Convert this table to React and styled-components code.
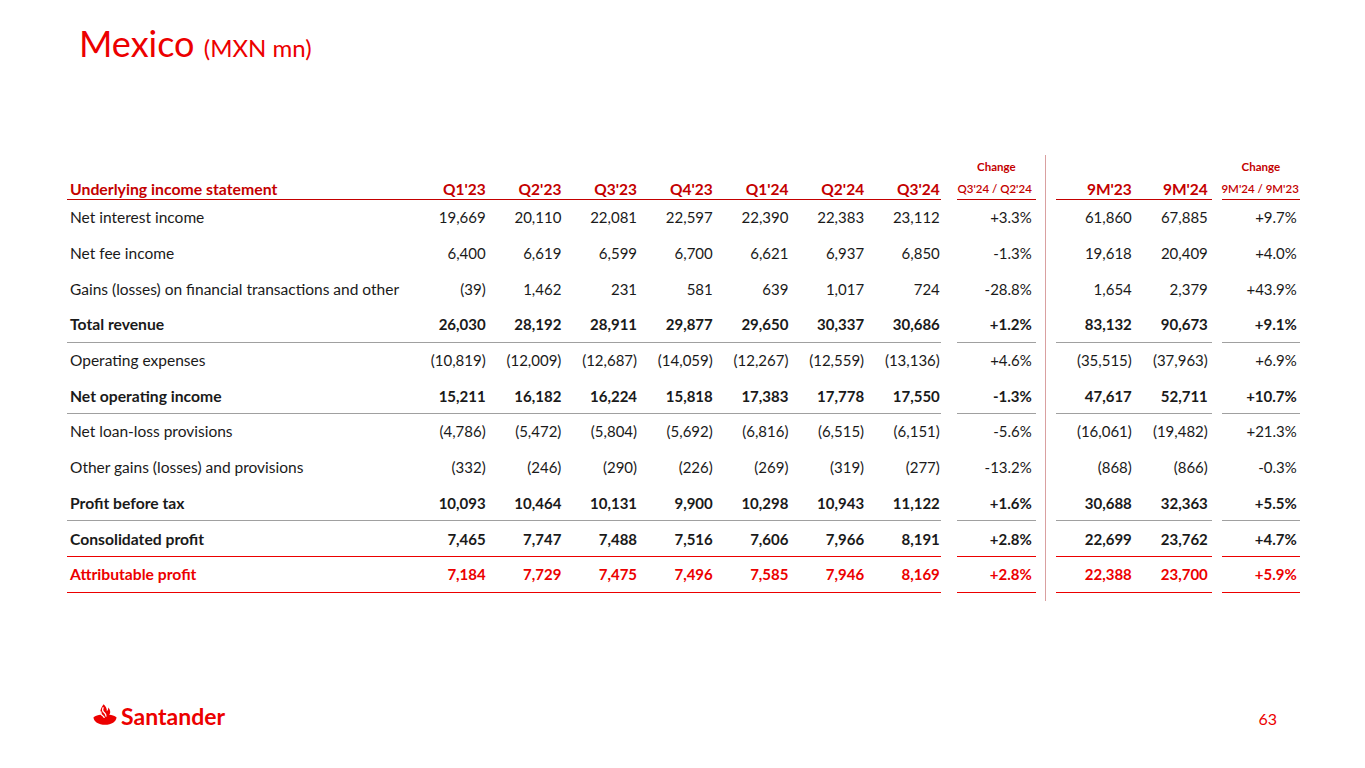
import React from 'react';
import styled, { createGlobalStyle } from 'styled-components';

const RED = '#ec0000';
const DARK_RED = '#c40000';
const FONT = "Lato, 'Open Sans', 'Liberation Sans', sans-serif";

const rows = [
  { label: 'Net interest income', q: ['19,669', '20,110', '22,081', '22,597', '22,390', '22,383', '23,112'], ch: '+3.3%', m: ['61,860', '67,885'], mch: '+9.7%' },
  { label: 'Net fee income', q: ['6,400', '6,619', '6,599', '6,700', '6,621', '6,937', '6,850'], ch: '-1.3%', m: ['19,618', '20,409'], mch: '+4.0%' },
  { label: 'Gains (losses) on financial transactions and other', q: ['(39)', '1,462', '231', '581', '639', '1,017', '724'], ch: '-28.8%', m: ['1,654', '2,379'], mch: '+43.9%' },
  { label: 'Total revenue', bold: true, line: 'grey', q: ['26,030', '28,192', '28,911', '29,877', '29,650', '30,337', '30,686'], ch: '+1.2%', m: ['83,132', '90,673'], mch: '+9.1%' },
  { label: 'Operating expenses', q: ['(10,819)', '(12,009)', '(12,687)', '(14,059)', '(12,267)', '(12,559)', '(13,136)'], ch: '+4.6%', m: ['(35,515)', '(37,963)'], mch: '+6.9%' },
  { label: 'Net operating income', bold: true, line: 'grey', q: ['15,211', '16,182', '16,224', '15,818', '17,383', '17,778', '17,550'], ch: '-1.3%', m: ['47,617', '52,711'], mch: '+10.7%' },
  { label: 'Net loan-loss provisions', q: ['(4,786)', '(5,472)', '(5,804)', '(5,692)', '(6,816)', '(6,515)', '(6,151)'], ch: '-5.6%', m: ['(16,061)', '(19,482)'], mch: '+21.3%' },
  { label: 'Other gains (losses) and provisions', q: ['(332)', '(246)', '(290)', '(226)', '(269)', '(319)', '(277)'], ch: '-13.2%', m: ['(868)', '(866)'], mch: '-0.3%' },
  { label: 'Profit before tax', bold: true, line: 'grey', q: ['10,093', '10,464', '10,131', '9,900', '10,298', '10,943', '11,122'], ch: '+1.6%', m: ['30,688', '32,363'], mch: '+5.5%' },
  { label: 'Consolidated profit', bold: true, line: 'red', q: ['7,465', '7,747', '7,488', '7,516', '7,606', '7,966', '8,191'], ch: '+2.8%', m: ['22,699', '23,762'], mch: '+4.7%' },
  { label: 'Attributable profit', bold: true, line: 'red', accent: true, q: ['7,184', '7,729', '7,475', '7,496', '7,585', '7,946', '8,169'], ch: '+2.8%', m: ['22,388', '23,700'], mch: '+5.9%' },
];

const quarters = ["Q1'23", "Q2'23", "Q3'23", "Q4'23", "Q1'24", "Q2'24", "Q3'24"];

const lineColor = (line) => (line === 'red' ? RED : line === 'grey' ? '#a0a0a0' : 'transparent');

const blanks = (n) => Array.from({ length: n }, (_, i) => <Spacer key={i} />);

const App = () => (
  <>
    <GlobalStyle />
    <Slide>
      <Title>
        Mexico <small>(MXN mn)</small>
      </Title>

      <TableWrap>
        <LeftGrid>
          {blanks(9)}
          <ChangeHead>Change</ChangeHead>

          <HeadLabel>Underlying income statement</HeadLabel>
          {quarters.map(q => <HeadCell key={q}>{q}</HeadCell>)}
          <Spacer />
          <HeadCell small pad="4px">Q3'24 / Q2'24</HeadCell>

          {rows.map(r => (
            <React.Fragment key={r.label}>
              <Label bold={r.bold} accent={r.accent} line={r.line}>{r.label}</Label>
              {r.q.map((v, i) => (
                <Num key={i} bold={r.bold} accent={r.accent} line={r.line}>{v}</Num>
              ))}
              <Spacer />
              <Num bold={r.bold} accent={r.accent} line={r.line} pad="4px">{r.ch}</Num>
            </React.Fragment>
          ))}
        </LeftGrid>

        <Divider />

        <RightGrid>
          {blanks(3)}
          <ChangeHead>Change</ChangeHead>

          <HeadCell pad="2px">9M'23</HeadCell>
          <HeadCell pad="4px">9M'24</HeadCell>
          <Spacer />
          <HeadCell small pad="1px">9M'24 / 9M'23</HeadCell>

          {rows.map(r => (
            <React.Fragment key={r.label}>
              <Num bold={r.bold} accent={r.accent} line={r.line} pad="2px">{r.m[0]}</Num>
              <Num bold={r.bold} accent={r.accent} line={r.line} pad="4px">{r.m[1]}</Num>
              <Spacer />
              <Num bold={r.bold} accent={r.accent} line={r.line} pad="3px">{r.mch}</Num>
            </React.Fragment>
          ))}
        </RightGrid>
      </TableWrap>

      <Footer>
        <Logo>
          <Flame />
          <span>Santander</span>
        </Logo>
        <PageNo>63</PageNo>
      </Footer>
    </Slide>
  </>
);

const Flame = () => (
  <svg width="24" height="21" viewBox="0 0 24 21" aria-hidden="true">
    <path
      fill={RED}
      d="M0.5 13.2 C3 11.4 6.6 10.6 9.2 10.6 L14.8 10.6 C17.4 10.6 21 11.4 23.5 13.2 C23.5 17.6 18.4 20.8 12 20.8 C5.6 20.8 0.5 17.6 0.5 13.2 Z"
    />
    <path
      fill={RED}
      d="M10.6 0.3 C8.6 3.2 7.2 5.6 7.4 8.2 C7.6 10.6 9.8 12.4 12 13.2 C14.6 12.6 17 10.8 17.2 8.4 C17.4 6.6 16.4 4.8 15.2 3.6 C15.4 5.4 14.8 6.6 13.8 7.2 C14.2 4.6 12.6 2.4 10.6 0.3 Z"
    />
    <path
      fill="none"
      stroke="#fff"
      strokeWidth="1.3"
      d="M10.3 3.2 C9.2 5.4 9.4 7.2 11.2 8.6 C12.6 9.8 13.2 11 13 12.6"
    />
    <path
      fill="none"
      stroke="#fff"
      strokeWidth="1.3"
      d="M7.8 7.4 C7.4 9.6 8.4 11 10 12 C10.9 12.6 11.3 13.2 11.2 14"
    />
  </svg>
);

const GlobalStyle = createGlobalStyle`
  html, body {
    margin: 0;
    padding: 0;
    background: #ffffff;
  }
  body {
    font-family: ${FONT};
    color: #1a1a1a;
  }
`;

const Slide = styled.div`
  width: 1365px;
  height: 768px;
  display: flex;
  flex-direction: column;
  box-sizing: border-box;
  padding: 18px 0 0 0;
  overflow: hidden;
`;

const Title = styled.h1`
  margin: 0 0 0 79px;
  font-family: ${FONT};
  font-weight: 400;
  font-size: 36px;
  line-height: 50px;
  color: ${RED};

  small {
    font-size: 24px;
    margin-left: 0;
  }
`;

const TableWrap = styled.div`
  display: flex;
  margin: 82px 0 0 67px;
  padding-bottom: 8px;
`;

const LeftGrid = styled.div`
  display: grid;
  grid-template-columns: 344px repeat(7, 75.7px) 16px 79px;
  grid-template-rows: 20px 25px repeat(11, 35.7px);
`;

const RightGrid = styled.div`
  display: grid;
  grid-template-columns: 78px 78px 10px 78px;
  grid-template-rows: 20px 25px repeat(11, 35.7px);
`;

const Divider = styled.div`
  width: 1px;
  background: #d9a0a0;
  margin: 0 10px -8px 9px;
  align-self: stretch;
`;

const Spacer = styled.div``;

const ChangeHead = styled.div`
  align-self: end;
  text-align: center;
  font-size: 11.5px;
  font-weight: 700;
  color: ${DARK_RED};
  line-height: 14px;
  padding-bottom: 1px;
`;

const HeadLabel = styled.div`
  font-size: 15.8px;
  font-weight: 700;
  color: ${DARK_RED};
  border-bottom: 1px solid ${DARK_RED};
  padding-left: 3px;
  line-height: 20px;
  display: flex;
  align-items: flex-end;
`;

const HeadCell = styled.div`
  white-space: nowrap;
  font-size: ${p => (p.small ? '11.5px' : '15.5px')};
  font-weight: ${p => (p.small ? 600 : 700)};
  color: ${DARK_RED};
  border-bottom: 1px solid ${DARK_RED};
  padding-right: ${p => p.pad || '1px'};
  line-height: 20px;
  display: flex;
  align-items: flex-end;
  justify-content: flex-end;
`;

const Cell = styled.div`
  display: flex;
  align-items: center;
  white-space: nowrap;
  font-size: 15px;
  font-weight: ${p => (p.bold ? 700 : 400)};
  color: ${p => (p.accent ? RED : '#1a1a1a')};
  border-bottom: 1px solid ${p => lineColor(p.line)};
  box-sizing: border-box;
`;

const Label = styled(Cell)`
  padding-left: 3px;
  font-size: ${p => (p.bold ? '15.7px' : '15.5px')};
`;

const Num = styled(Cell)`
  justify-content: flex-end;
  padding-right: ${p => p.pad || '1px'};
`;

const Footer = styled.div`
  margin-top: auto;
  height: 64px;
  display: flex;
  align-items: flex-start;
  justify-content: space-between;
  padding: 0 88px 0 93px;
`;

const Logo = styled.div`
  display: flex;
  align-items: flex-end;
  gap: 4px;
  color: ${RED};
  font-size: 23px;
  font-weight: 700;
  line-height: 24px;

  svg {
    margin-bottom: 3px;
  }
`;

const PageNo = styled.div`
  color: ${RED};
  font-size: 16px;
  line-height: 22px;
  margin-top: 4px;
`;

export default App;
